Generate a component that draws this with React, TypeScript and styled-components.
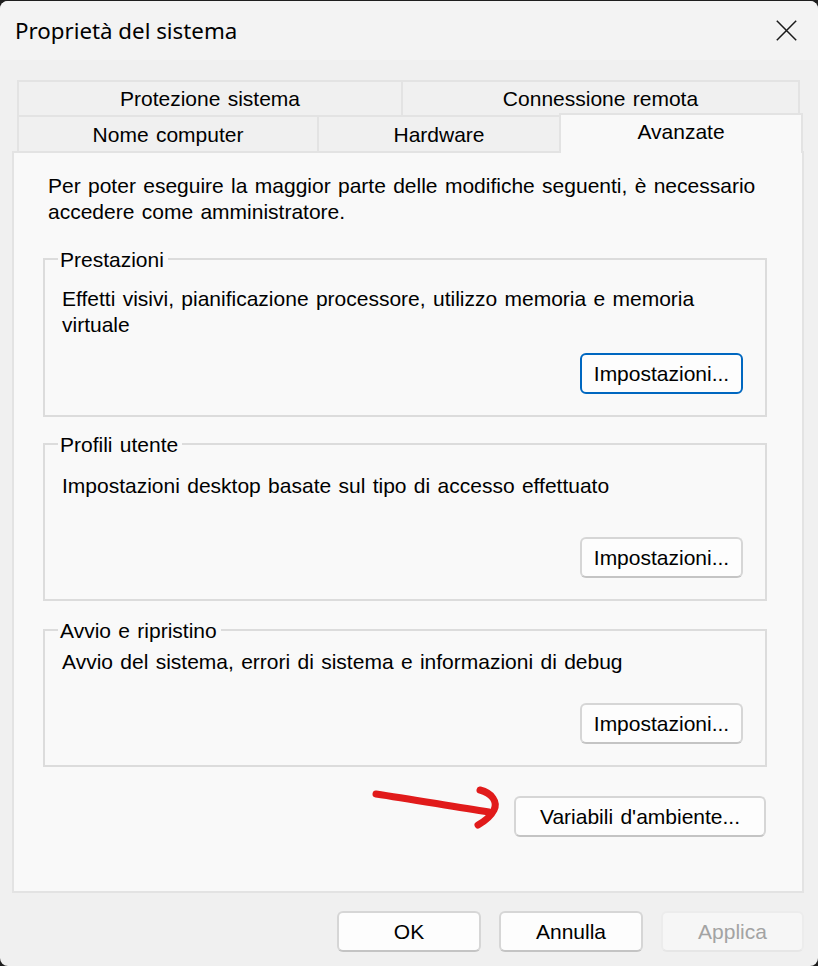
import React from "react";
import styled, { createGlobalStyle } from "styled-components";

const Global = createGlobalStyle`
  html, body { margin: 0; padding: 0; background: #1e1e1e; }
  body { width: 818px; height: 966px; overflow: hidden; }
`;

const uiFont = `"Liberation Sans", Arial, sans-serif`;

const Window = styled.div`
  position: relative;
  margin-top: 1px;
  width: 818px;
  height: 965px;
  background: #f0f0f0;
  border-radius: 8px;
  overflow: hidden;
  display: flex;
  flex-direction: column;
  font-family: ${uiFont};
  font-size: 21px;
  word-spacing: 1.5px;
  color: #000;
`;

const TitleBar = styled.div`
  height: 59px;
  flex: none;
  background: #f3f3f3;
  display: flex;
  align-items: center;
  justify-content: space-between;
  padding: 0 21px 0 15px;
  box-sizing: border-box;
`;

const Title = styled.div`
  font-family: "Noto Sans", sans-serif;
  font-size: 22.3px;
  word-spacing: 0;
`;

const CloseButton = styled.div`
  width: 21px;
  height: 21px;
  display: flex;
  align-items: center;
  justify-content: center;
  margin-top: -1px;
`;

const Body = styled.div`
  flex: 1;
  display: flex;
  flex-direction: column;
  padding: 20px 14px 0 12px;
`;

const TabRow = styled.div`
  position: relative;
  z-index: 1;
  display: flex;
  align-items: flex-end;
  padding-left: 5px;
`;

const Tab = styled.div<{ $w: number; $h: number; $active?: boolean; $first?: boolean }>`
  box-sizing: border-box;
  width: ${(p) => p.$w}px;
  height: ${(p) => p.$h}px;
  margin-left: ${(p) => (p.$first ? 0 : -2)}px;
  margin-top: ${(p) => (p.$active ? -2 : 0)}px;
  margin-bottom: ${(p) => (p.$active ? -2 : 0)}px;
  position: relative;
  z-index: ${(p) => (p.$active ? 2 : 0)};
  border: 2px solid #e3e3e3;
  border-bottom: none;
  background: ${(p) => (p.$active ? "#f9f9f9" : "#f0f0f0")};
  display: flex;
  align-items: ${(p) => (p.$active ? "flex-start" : "center")};
  padding-top: ${(p) => (p.$active ? 4 : 1)}px;
  justify-content: center;
  line-height: 26px;
`;

const Panel = styled.div`
  box-sizing: border-box;
  width: 792px;
  height: 742px;
  border: 2px solid #e3e3e3;
  background: #f9f9f9;
  padding: 20px 0 0 29px;
  display: flex;
  flex-direction: column;
`;

const Intro = styled.p`
  margin: 0 0 33px 5px;
  width: 730px;
  line-height: 26px;
`;

const Group = styled.div<{ $h: number; $top: number; $pt: number }>`
  position: relative;
  box-sizing: border-box;
  width: 724px;
  height: ${(p) => p.$h}px;
  margin-top: ${(p) => p.$top}px;
  border: 2px solid #dcdcdc;
  padding: ${(p) => p.$pt}px 22px 21px 17px;
  display: flex;
  flex-direction: column;
`;

const Legend = styled.span`
  position: absolute;
  left: 13px;
  top: -13px;
  padding: 0 4px 0 2px;
  background: #f9f9f9;
  line-height: 26px;
`;

const Desc = styled.p`
  margin: 0;
  line-height: 26px;
  width: 650px;
`;

const Button = styled.button<{ $w: number; $focus?: boolean; $disabled?: boolean }>`
  box-sizing: border-box;
  width: ${(p) => p.$w}px;
  height: 41px;
  flex: none;
  border-radius: 6px;
  font-family: ${uiFont};
  font-size: 21px;
  word-spacing: 1.5px;
  color: ${(p) => (p.$disabled ? "#a3a3a3" : "#000")};
  background: ${(p) => (p.$disabled ? "#f6f6f6" : "#fdfdfd")};
  border: ${(p) =>
    p.$focus
      ? "2px solid #0067c0"
      : p.$disabled
      ? "2px solid #ececec"
      : "2px solid #d6d6d6"};
  border-bottom-color: ${(p) =>
    p.$focus ? "#0067c0" : p.$disabled ? "#e6e6e6" : "#c4c4c4"};
  padding: 1px 0 0;
  display: flex;
  align-items: center;
  justify-content: center;
`;

const GroupButton = styled(Button)`
  margin-top: auto;
  align-self: flex-end;
`;

const EnvRow = styled.div`
  width: 723px;
  display: flex;
  justify-content: flex-end;
  margin-top: 29px;
`;

const Footer = styled.div`
  display: flex;
  justify-content: flex-end;
  gap: 18px;
  margin-top: 18px;
`;

const Annotation = styled.svg`
  position: absolute;
  left: 0;
  top: -1px;
  width: 818px;
  height: 966px;
  pointer-events: none;
`;

export default function App() {
  return (
    <>
      <Global />
      <Window>
        <TitleBar>
          <Title>Proprietà del sistema</Title>
          <CloseButton>
            <svg width="21" height="21" viewBox="0 0 21 21">
              <path d="M0.8 0.8 L20.2 20.2 M20.2 0.8 L0.8 20.2" stroke="#1a1a1a" strokeWidth="1.5" fill="none" />
            </svg>
          </CloseButton>
        </TitleBar>
        <Body>
          <TabRow>
            <Tab $w={386} $h={35} $first>Protezione sistema</Tab>
            <Tab $w={399} $h={35}>Connessione remota</Tab>
          </TabRow>
          <TabRow>
            <Tab $w={302} $h={36} $first>Nome computer</Tab>
            <Tab $w={244} $h={36}>Hardware</Tab>
            <Tab $w={244} $h={40} $active>Avanzate</Tab>
          </TabRow>
          <Panel>
            <Intro>
              Per poter eseguire la maggior parte delle modifiche seguenti, è necessario accedere come amministratore.
            </Intro>
            <Group $h={159} $top={0} $pt={26}>
              <Legend>Prestazioni</Legend>
              <Desc>Effetti visivi, pianificazione processore, utilizzo memoria e memoria virtuale</Desc>
              <GroupButton $w={163} $focus>Impostazioni...</GroupButton>
            </Group>
            <Group $h={158} $top={26} $pt={28}>
              <Legend>Profili utente</Legend>
              <Desc>Impostazioni desktop basate sul tipo di accesso effettuato</Desc>
              <GroupButton $w={163}>Impostazioni...</GroupButton>
            </Group>
            <Group $h={138} $top={28} $pt={18}>
              <Legend>Avvio e ripristino</Legend>
              <Desc>Avvio del sistema, errori di sistema e informazioni di debug</Desc>
              <GroupButton $w={163}>Impostazioni...</GroupButton>
            </Group>
            <EnvRow>
              <Button $w={252}>Variabili d'ambiente...</Button>
            </EnvRow>
          </Panel>
          <Footer>
            <Button $w={144}>OK</Button>
            <Button $w={144}>Annulla</Button>
            <Button $w={143} $disabled>Applica</Button>
          </Footer>
        </Body>
        <Annotation viewBox="0 0 818 966">
          <path
            d="M376 794 C 410 799, 450 806, 489 812"
            stroke="#e11b1b"
            strokeWidth="7"
            strokeLinecap="round"
            fill="none"
          />
          <path
            d="M480 790 C 492 793, 498 802, 494 810 C 491 816, 485 821, 478 825"
            stroke="#e11b1b"
            strokeWidth="7"
            strokeLinecap="round"
            strokeLinejoin="round"
            fill="none"
          />
        </Annotation>
      </Window>
    </>
  );
}
